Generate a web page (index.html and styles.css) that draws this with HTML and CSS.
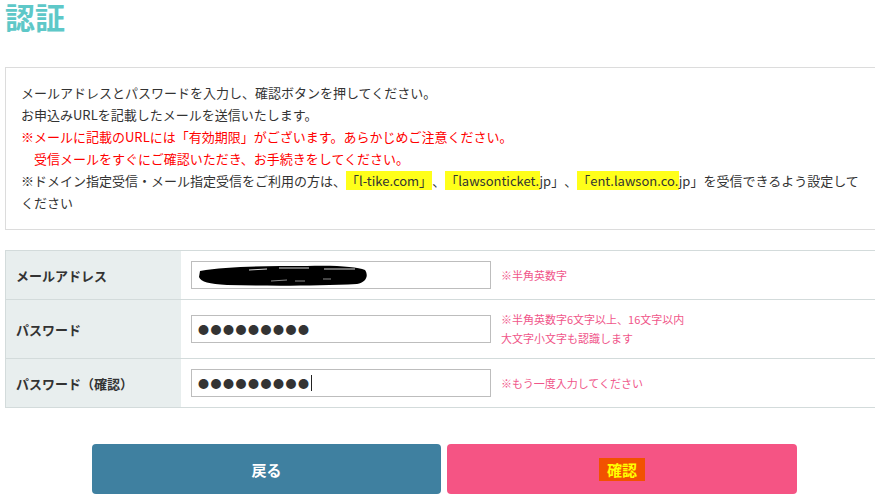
FILE: index.html
```html
<!DOCTYPE html>
<html lang="ja">
<head>
<meta charset="utf-8">
<title>認証</title>
<link rel="stylesheet" href="styles.css">
</head>
<body>
<div class="page">
  <h1 class="title">認証</h1>

  <div class="notice">
    <p>メールアドレスとパスワードを入力し、確認ボタンを押してください。</p>
    <p>お申込みURLを記載したメールを送信いたします。</p>
    <p class="red">※メールに記載のURLには「有効期限」がございます。あらかじめご注意ください。</p>
    <p class="red indent">受信メールをすぐにご確認いただき、お手続きをしてください。</p>
    <p>※ドメイン指定受信・メール指定受信をご利用の方は、<span class="hl">「l-tike.com」</span>、<span class="hl">「lawsonticket.</span>jp」、<span class="hl">「ent.lawson.co.</span>jp」を受信できるよう設定して<br>ください</p>
  </div>

  <div class="form">
    <div class="row row-short">
      <div class="label">メールアドレス</div>
      <div class="value">
        <div class="field">
          <svg class="redact" width="172" height="24" viewBox="0 0 172 24">
            <path d="M3 8 C30 3 70 3 110 3 C140 2 160 4 168 7 C172 13 169 19 160 21 C120 23 70 23 30 22 C12 21 4 19 2 14 Z" fill="#000"/>
            <path d="M52 7 L70 6 M82 5 L112 5 M127 6 L158 6" stroke="#fff" stroke-width="1" fill="none" opacity="0.85"/>
            <path d="M74 18 L90 17 M98 18 L108 18 M126 16 L134 16" stroke="#8a8a8a" stroke-width="1" fill="none"/>
          </svg>
        </div>
        <div class="hint">※半角英数字</div>
      </div>
    </div>
    <div class="row row-tall">
      <div class="label">パスワード</div>
      <div class="value">
        <div class="field"><span class="dots">●●●●●●●●●</span></div>
        <div class="hint">※半角英数字6文字以上、16文字以内<br>大文字小文字も認識します</div>
      </div>
    </div>
    <div class="row row-short">
      <div class="label">パスワード（確認）</div>
      <div class="value">
        <div class="field"><span class="dots">●●●●●●●●●</span><span class="caret"></span></div>
        <div class="hint">※もう一度入力してください</div>
      </div>
    </div>
  </div>

  <div class="buttons">
    <button class="btn btn-back" type="button">戻る</button>
    <button class="btn btn-confirm" type="button"><span class="mark">確認</span></button>
  </div>
</div>
</body>
</html>
```

FILE: styles.css
```css
html, body {
  margin: 0;
  padding: 0;
  background: #fff;
  overflow: hidden;
}
body {
  font-family: "Noto Sans CJK JP", "Noto Sans", sans-serif;
  color: #333;
  text-spacing-trim: space-all;
}
.page {
  width: 880px;
  margin-left: 5px;
}
.title {
  margin: 0 0 35px 0;
  height: 32px;
  line-height: 32px;
  font-size: 30px;
  font-weight: 700;
  color: #5ec8c8;
}
.notice {
  border: 1px solid #dcdcdc;
  padding: 14px 15px 15px 15px;
  font-size: 13px;
  line-height: 22px;
}
.notice p {
  margin: 0;
}
.red {
  color: #ff0000;
}
.indent {
  padding-left: 13px;
}
.hl {
  background: #ffff1a;
}
.form {
  margin-top: 20px;
  border-top: 1px solid #d3dbdb;
  border-left: 1px solid #d3dbdb;
}
.row {
  display: flex;
  border-bottom: 1px solid #d3dbdb;
}
.row-short { height: 48px; }
.row-tall { height: 58px; }
.label {
  width: 165px;
  flex: none;
  background: #e8eeee;
  padding-left: 10px;
  display: flex;
  align-items: center;
  font-size: 13px;
  font-weight: 700;
  color: #333;
}
.value {
  display: flex;
  align-items: center;
  padding-left: 10px;
  gap: 10px;
}
.field {
  width: 288px;
  height: 26px;
  border: 1px solid #bdbdbd;
  padding: 0 4px 0 6px;
  display: flex;
  align-items: center;
  background: #fff;
}
.redact {
  display: block;
  margin-left: -1px;
}
.dots {
  font-size: 11px;
  letter-spacing: 1.5px;
  line-height: 26px;
  color: #333;
}
.caret {
  display: inline-block;
  width: 1px;
  height: 16px;
  background: #222;
  margin-left: 0;
}
.hint {
  font-size: 11px;
  line-height: 19px;
  color: #f0568a;
}
.buttons {
  display: flex;
  justify-content: center;
  gap: 6px;
  margin-top: 36px;
  padding-right: 1px;
}
.btn {
  width: 350px;
  height: 50px;
  border: none;
  border-radius: 4px;
  font-family: "Noto Sans CJK JP", "Noto Sans", sans-serif;
  font-size: 15px;
  font-weight: 700;
  color: #fff;
  padding: 0;
}
.btn-back {
  width: 349px;
  background: #3f80a0;
}
.btn-confirm {
  background: #f55484;
}
.mark {
  background: #f25200;
  color: #ffff00;
  padding: 1px 8px;
}
```
